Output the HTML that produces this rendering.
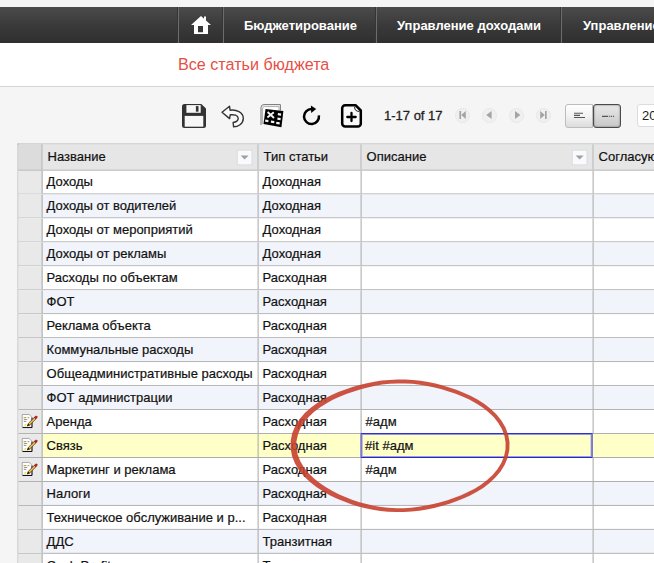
<!DOCTYPE html>
<html><head><meta charset="utf-8">
<style>
html,body{margin:0;padding:0;}
body{width:654px;height:563px;overflow:hidden;background:#f5f5f5;font-family:"Liberation Sans",sans-serif;position:relative;}
#nav{position:absolute;left:0;top:7px;width:654px;height:36px;background:linear-gradient(#4b4b4b 0%,#3a3a3a 50%,#2f2f2f 100%);}
#nav .sep{position:absolute;top:0;width:1px;height:36px;background:#6c6c6c;border-left:1px solid #353535;}
#nav .it{position:absolute;top:0;height:36px;line-height:38px;color:#fff;font-weight:bold;font-size:13px;white-space:nowrap;}
#title{position:absolute;left:0;top:43px;width:654px;height:43px;background:#fff;border-bottom:1px solid #d4d4d4;}
#title span{position:absolute;left:178px;top:12px;font-size:16.15px;color:#e64f45;white-space:nowrap;}
svg{position:absolute;overflow:visible}
#pg{position:absolute;left:384px;top:108px;font-size:13px;line-height:15px;color:#222;-webkit-text-stroke:0.3px #222;white-space:nowrap;}
.pb{position:absolute;top:107.5px;width:15px;height:15px;border-radius:8px;background:#f0f0f0;box-sizing:border-box;border:1px solid #e8e8e8;}
.vb{position:absolute;top:104px;height:23.5px;box-sizing:border-box;}
#vb1{left:565px;width:28px;border:1px solid #bcbcbc;border-radius:3px 0 0 3px;background:linear-gradient(#ffffff,#f2f2f2 50%,#dcdcdc);}
#vb2{left:593px;width:28px;border:1px solid #4a4a4a;border-radius:3px;background:linear-gradient(#e9e9e9,#d8d8d8 50%,#c8c8c8);box-shadow:inset 0 0 2px #666;}
#sel{position:absolute;left:637px;top:104px;width:40px;height:23px;box-sizing:border-box;border:1px solid #dcdcdc;border-radius:3px;background:#fff;font-size:13px;line-height:21px;padding-left:4px;color:#222;}
#grid{transform-origin:0 0;transform:translate(-0.4px,-0.45px) scaleY(0.9983);position:absolute;left:18px;top:144px;width:640px;height:430px;background:#fff;border-left:1px solid #a8a8a8;border-top:1px solid #a8a8a8;}
.hdr{position:absolute;left:0;top:0;height:25px;width:640px;background:#e6e6e6;border-bottom:1px solid #a8a8a8;z-index:2}
.row{position:absolute;left:0;width:640px;height:24px;border-bottom:1px solid #acacac;box-sizing:border-box;}
.row.odd{background:#fff}
.row.even{background:#f1f4fa}
.row.sel{background:#ffffc8}
.c{position:absolute;top:0;height:100%;box-sizing:border-box;border-right:1px solid #a8a8a8;font-size:13px;line-height:23px;color:#111;-webkit-text-stroke:0.2px #111;white-space:nowrap;overflow:hidden;padding-left:4px;}
.c0{left:0;width:24px;background:#e9e9e9;padding:0}
.c1{left:24px;width:216px;}
.c2{left:240px;width:103px;}
.c3{left:343px;width:232px;}
.c4{left:575px;width:80px;}
.hdr .c{line-height:24px;background:#e6e6e6;padding-left:5px}
.hdr .c0{background:#dcdcdc}
.dd{position:absolute;top:5px;width:14px;height:14px;border:1px solid #d4d4d4;background:#f9fafd;}
.dd:after{content:"";position:absolute;left:3px;top:5px;border:4px solid transparent;border-top:4px solid #a0a0a0;border-bottom:none;}
.edit{position:absolute;left:342px;top:-1px;width:232px;height:25px;border:1px solid #2323dc;box-shadow:inset 0 0 0 1px rgba(40,40,220,.45);box-sizing:border-box;background:#ffffc8;line-height:23px;padding-left:3.5px}
.pen{left:-1px;top:-1px}
</style></head><body>
<div id="nav">
 <div class="sep" style="left:177px"></div>
 <div class="sep" style="left:222px"></div>
 <div class="sep" style="left:375px"></div>
 <div class="sep" style="left:560px"></div>
 <svg style="left:190px;top:8px" width="22" height="20" viewBox="0 0 22 20"><path d="M11 1 L1 10 H4 V19 H18 V10 H21 L16 5.5 V1.5 H14 V3.7 Z M8 11 H13 V17.3 H8 Z" fill="#fff" fill-rule="evenodd"/></svg>
 <div class="it" style="left:244px">Бюджетирование</div>
 <div class="it" style="left:397px">Управление доходами</div>
 <div class="it" style="left:583px">Управление</div>
</div>
<div id="title"><span>Все статьи бюджета</span></div>

<!-- toolbar icons -->
<svg style="left:182px;top:104px" width="24" height="24" viewBox="0 0 24 24">
 <path d="M2.5 0 H19.3 L24 4.5 V21.5 a2.5 2.5 0 0 1 -2.5 2.5 H2.5 a2.5 2.5 0 0 1 -2.5 -2.5 V2.5 a2.5 2.5 0 0 1 2.5 -2.5 Z" fill="#333"/>
 <rect x="4.4" y="1.1" width="14.3" height="7.7" fill="#f7f7f7"/>
 <rect x="13.9" y="2.1" width="2.6" height="5.6" fill="#333"/>
 <rect x="2.7" y="11.9" width="18.6" height="10.8" fill="#f7f7f7"/>
</svg>
<svg style="left:216px;top:100px" width="34" height="32" viewBox="216 100 34 32">
 <path d="M222 112.3 L229.5 106.3 L230.1 110.2 C236 109.4 243.5 112 243.3 118.6 C243 124 238 126.8 233.6 126.8 L233.1 122.5 C236.5 122 238.3 120.5 238.2 118.2 C238 115 234 114.5 230.2 114.8 L229.6 118.6 Z" fill="#f9f9f9" stroke="#333" stroke-width="1.4" stroke-linejoin="round"/>
</svg>
<svg style="left:255px;top:100px" width="34" height="32" viewBox="0 0 34 32">
 <path d="M6 25 V7.5 Q6 4.6 9 4.6 H25.4 V10.5" fill="none" stroke="#777" stroke-width="1"/>
 <path d="M7.6 24 V8.6 Q7.6 6.6 9.6 6.6 H24 V10.5" fill="#fff" stroke="#999" stroke-width="0.8"/>
 <path d="M10.5 9.1 L28.4 11.1 L26.4 27.3 L8.5 23.9 Z" fill="#000"/>
 <path d="M12.6 12 L19 18 M18.8 12.2 L12.4 17.4" stroke="#f4f4f4" stroke-width="1.9"/>
 <path d="M22.9 13.1 l3.3 .4 l-.2 2.2 l-3.3 -.4z M22.5 17.6 l3.2 .4 l-.2 2.2 l-3.2 -.4z M10.3 19.5 l3.2 .5 l-.2 2.2 l-3.2 -.5z M16 20.6 l3.4 .5 l-.2 2.1 l-3.4 -.5z M21.3 21.8 l3.5 .5 l-.2 2.2 l-3.5 -.6z" fill="#f4f4f4"/>
</svg>
<svg style="left:295px;top:100px" width="34" height="32" viewBox="0 0 34 32">
 <path d="M23.9 15.4 A7.5 7.5 0 1 1 16.6 9.0" fill="none" stroke="#000" stroke-width="2.5"/>
 <path d="M15.9 5.6 L21.2 9.1 L16.2 12.9 Z" fill="#000"/>
</svg>
<svg style="left:335px;top:100px" width="34" height="32" viewBox="0 0 34 32">
 <path d="M10.2 5.2 H20.5 L25.8 10.5 V23.6 a3 3 0 0 1 -3 3 H10.2 a3 3 0 0 1 -3 -3 V8.2 a3 3 0 0 1 3 -3 Z" fill="#fafafa" stroke="#000" stroke-width="2.5" stroke-linejoin="round"/>
 <path d="M19.6 6.8 Q19.6 11.6 24.4 11.4" fill="none" stroke="#000" stroke-width="0.9"/>
 <path d="M12.3 17 H20.7 M16.5 12.9 V21.1" stroke="#000" stroke-width="2.3" stroke-linecap="round"/>
</svg>

<div id="pg">1-17 of 17</div>
<div class="pb" style="left:455px"></div>
<div class="pb" style="left:481.5px"></div>
<div class="pb" style="left:509px"></div>
<div class="pb" style="left:536px"></div>
<svg style="left:454px;top:107px" width="100" height="17" viewBox="454 107 100 17">
 <g fill="#a4a4a4">
  <path d="M459.4 111 h1.7 v8 h-1.7z M465.8 111 v8 l-4.6 -4z"/>
  <path d="M491.6 111 v8 l-5.4 -4z"/>
  <path d="M515 111 v8 l5.4 -4z"/>
  <path d="M540.2 111 v8 l4.6 -4z M545 111 h1.7 v8 h-1.7z"/>
 </g>
</svg>
<div class="vb" id="vb1"></div>
<div class="vb" id="vb2"></div>
<svg style="left:565px;top:104px" width="56" height="23" viewBox="565 104 56 23">
 <path d="M574 113.2 h9 M574 115.4 h6 M574 117.5 h11" stroke="#555" stroke-width="1.1"/>
 <path d="M602 116.4 h6.2 M609.3 116.4 h1 M611.1 116.4 h1 M613 116.4 h1" stroke="#555" stroke-width="1.1"/>
</svg>
<div id="sel">20</div>

<div id="grid">
 <div class="hdr">
  <div class="c c0"></div>
  <div class="c c1">Название<div class="dd" style="left:194px"></div></div>
  <div class="c c2">Тип статьи</div>
  <div class="c c3">Описание<div class="dd" style="left:210px"></div></div>
  <div class="c c4">Согласую</div>
 </div>
 <div class="row odd" style="top:26px"><div class="c c0"></div><div class="c c1">Доходы</div><div class="c c2">Доходная</div><div class="c c3"></div><div class="c c4"></div></div>
 <div class="row even" style="top:50px"><div class="c c0"></div><div class="c c1">Доходы от водителей</div><div class="c c2">Доходная</div><div class="c c3"></div><div class="c c4"></div></div>
 <div class="row odd" style="top:74px"><div class="c c0"></div><div class="c c1">Доходы от мероприятий</div><div class="c c2">Доходная</div><div class="c c3"></div><div class="c c4"></div></div>
 <div class="row even" style="top:98px"><div class="c c0"></div><div class="c c1">Доходы от рекламы</div><div class="c c2">Доходная</div><div class="c c3"></div><div class="c c4"></div></div>
 <div class="row odd" style="top:122px"><div class="c c0"></div><div class="c c1">Расходы по объектам</div><div class="c c2">Расходная</div><div class="c c3"></div><div class="c c4"></div></div>
 <div class="row even" style="top:146px"><div class="c c0"></div><div class="c c1">ФОТ</div><div class="c c2">Расходная</div><div class="c c3"></div><div class="c c4"></div></div>
 <div class="row odd" style="top:170px"><div class="c c0"></div><div class="c c1">Реклама объекта</div><div class="c c2">Расходная</div><div class="c c3"></div><div class="c c4"></div></div>
 <div class="row even" style="top:194px"><div class="c c0"></div><div class="c c1">Коммунальные расходы</div><div class="c c2">Расходная</div><div class="c c3"></div><div class="c c4"></div></div>
 <div class="row odd" style="top:218px"><div class="c c0"></div><div class="c c1">Общеадминистративные расходы</div><div class="c c2">Расходная</div><div class="c c3"></div><div class="c c4"></div></div>
 <div class="row even" style="top:242px"><div class="c c0"></div><div class="c c1">ФОТ администрации</div><div class="c c2">Расходная</div><div class="c c3"></div><div class="c c4"></div></div>
 <div class="row odd" style="top:266px"><div class="c c0"><svg class="pen" width="26" height="24" viewBox="0 0 26 24"><path d="M4.6 5.4 H11.6 L14.3 8.1 V18.3 H4.6 Z" fill="#fdfdfd" stroke="#8a8a8a" stroke-width="0.7"/><path d="M5 18.5 H14.4 V8.6" fill="none" stroke="#111" stroke-width="1"/><path d="M6 8.6h2.7M10 8.6h1.7M6.2 10.5h3.4M6.2 12.4h2.5" stroke="#8c8c58" stroke-width="0.9"/><path d="M6.9 16.4l1.6 -1.2M11.4 16.3h1.4" stroke="#e6e61e" stroke-width="1.3"/><g transform="translate(0 0.9)"><path d="M9.7 16.1 L10.7 13.5 L16.9 7.3 L18.4 8.8 L12.2 15 Z" fill="#f6bb50" stroke="#3a2a10" stroke-width="0.7"/><path d="M16.7 7.5 L18.1 6.1 Q19.2 5.6 19.7 6.7 Q19.8 7.5 18.3 9 Z" fill="#d81818" stroke="#7a1010" stroke-width="0.5"/><path d="M9.7 16.1 L10.7 13.7 L12.1 15.1 Z" fill="#111"/></g></svg></div><div class="c c1">Аренда</div><div class="c c2">Расходная</div><div class="c c3">#адм</div><div class="c c4"></div></div>
 <div class="row sel" style="top:290px"><div class="c c0"><svg class="pen" width="26" height="24" viewBox="0 0 26 24"><path d="M4.6 5.4 H11.6 L14.3 8.1 V18.3 H4.6 Z" fill="#fdfdfd" stroke="#8a8a8a" stroke-width="0.7"/><path d="M5 18.5 H14.4 V8.6" fill="none" stroke="#111" stroke-width="1"/><path d="M6 8.6h2.7M10 8.6h1.7M6.2 10.5h3.4M6.2 12.4h2.5" stroke="#8c8c58" stroke-width="0.9"/><path d="M6.9 16.4l1.6 -1.2M11.4 16.3h1.4" stroke="#e6e61e" stroke-width="1.3"/><g transform="translate(0 0.9)"><path d="M9.7 16.1 L10.7 13.5 L16.9 7.3 L18.4 8.8 L12.2 15 Z" fill="#f6bb50" stroke="#3a2a10" stroke-width="0.7"/><path d="M16.7 7.5 L18.1 6.1 Q19.2 5.6 19.7 6.7 Q19.8 7.5 18.3 9 Z" fill="#d81818" stroke="#7a1010" stroke-width="0.5"/><path d="M9.7 16.1 L10.7 13.7 L12.1 15.1 Z" fill="#111"/></g></svg></div><div class="c c1">Связь</div><div class="c c2">Расходная</div><div class="c c3 edit">#it #адм</div><div class="c c4"></div></div>
 <div class="row odd" style="top:314px"><div class="c c0"><svg class="pen" width="26" height="24" viewBox="0 0 26 24"><path d="M4.6 5.4 H11.6 L14.3 8.1 V18.3 H4.6 Z" fill="#fdfdfd" stroke="#8a8a8a" stroke-width="0.7"/><path d="M5 18.5 H14.4 V8.6" fill="none" stroke="#111" stroke-width="1"/><path d="M6 8.6h2.7M10 8.6h1.7M6.2 10.5h3.4M6.2 12.4h2.5" stroke="#8c8c58" stroke-width="0.9"/><path d="M6.9 16.4l1.6 -1.2M11.4 16.3h1.4" stroke="#e6e61e" stroke-width="1.3"/><g transform="translate(0 0.9)"><path d="M9.7 16.1 L10.7 13.5 L16.9 7.3 L18.4 8.8 L12.2 15 Z" fill="#f6bb50" stroke="#3a2a10" stroke-width="0.7"/><path d="M16.7 7.5 L18.1 6.1 Q19.2 5.6 19.7 6.7 Q19.8 7.5 18.3 9 Z" fill="#d81818" stroke="#7a1010" stroke-width="0.5"/><path d="M9.7 16.1 L10.7 13.7 L12.1 15.1 Z" fill="#111"/></g></svg></div><div class="c c1">Маркетинг и реклама</div><div class="c c2">Расходная</div><div class="c c3">#адм</div><div class="c c4"></div></div>
 <div class="row even" style="top:338px"><div class="c c0"></div><div class="c c1">Налоги</div><div class="c c2">Расходная</div><div class="c c3"></div><div class="c c4"></div></div>
 <div class="row odd" style="top:362px"><div class="c c0"></div><div class="c c1">Техническое обслуживание и р...</div><div class="c c2">Расходная</div><div class="c c3"></div><div class="c c4"></div></div>
 <div class="row even" style="top:386px"><div class="c c0"></div><div class="c c1">ДДС</div><div class="c c2">Транзитная</div><div class="c c3"></div><div class="c c4"></div></div>
 <div class="row odd" style="top:410px"><div class="c c0"></div><div class="c c1">Cash Profit</div><div class="c c2">Транзитная</div><div class="c c3"></div><div class="c c4"></div></div>
</div>
<svg style="left:0;top:0" width="654" height="563" viewBox="0 0 654 563">
 <path d="M405.1 379.5 L412.9 380.0 L420.5 380.8 L428.1 382.0 L435.5 383.6 L442.8 385.5 L450.0 387.7 L457.0 390.1 L464.1 392.9 L471.0 396.1 L477.9 399.8 L484.5 404.1 L490.8 408.9 L496.6 414.5 L501.5 420.7 L505.5 427.4 L508.2 434.7 L509.5 442.3 L509.3 450.0 L507.7 457.5 L504.7 464.8 L500.6 471.5 L495.4 477.6 L489.6 483.1 L483.2 487.9 L476.5 492.1 L469.6 495.7 L462.7 498.8 L455.7 501.5 L448.7 503.9 L441.6 506.0 L434.3 507.9 L426.9 509.4 L419.3 510.7 L411.6 511.6 L403.8 512.1 L395.9 512.1 L388.1 511.8 L380.4 511.0 L372.9 509.8 L365.5 508.3 L358.3 506.4 L351.2 504.2 L344.2 501.6 L337.2 498.7 L330.2 495.4 L323.4 491.6 L316.7 487.3 L310.3 482.3 L304.4 476.7 L299.2 470.5 L295.0 463.6 L292.1 456.3 L290.6 448.6 L290.7 440.8 L292.2 433.2 L295.2 425.9 L299.5 419.2 L304.8 413.1 L310.8 407.7 L317.3 402.9 L324.2 398.8 L331.2 395.2 L338.3 392.1 L345.4 389.5 L352.5 387.1 L359.6 385.0 L366.9 383.3 L374.3 381.8 L381.8 380.6 L389.5 379.9 L397.3 379.5 Z M397.4 383.4 L389.8 383.8 L382.3 384.6 L375.0 385.8 L367.8 387.4 L360.8 389.2 L353.8 391.4 L346.9 393.8 L340.1 396.5 L333.3 399.6 L326.7 403.2 L320.2 407.2 L314.2 411.8 L308.7 416.9 L304.0 422.5 L300.3 428.5 L297.8 434.9 L296.4 441.4 L296.4 448.1 L297.7 454.7 L300.2 461.1 L303.8 467.3 L308.4 473.0 L313.8 478.3 L319.7 483.1 L326.0 487.3 L332.5 491.1 L339.2 494.4 L345.9 497.3 L352.6 499.9 L359.5 502.2 L366.5 504.1 L373.6 505.7 L381.0 507.0 L388.4 507.8 L396.0 508.2 L403.7 508.2 L411.3 507.7 L418.8 506.8 L426.2 505.6 L433.4 504.1 L440.5 502.3 L447.5 500.2 L454.4 497.8 L461.2 495.2 L467.9 492.1 L474.6 488.7 L481.0 484.7 L487.1 480.1 L492.6 474.9 L497.4 469.2 L501.3 463.0 L504.0 456.4 L505.5 449.5 L505.6 442.6 L504.4 435.7 L501.9 429.1 L498.3 422.9 L493.7 417.1 L488.3 411.9 L482.3 407.3 L475.9 403.2 L469.3 399.6 L462.5 396.5 L455.7 393.8 L448.7 391.4 L441.7 389.2 L434.6 387.4 L427.4 385.9 L420.0 384.7 L412.5 383.8 L405.0 383.4 Z" fill="#c8402f" fill-opacity="0.9" fill-rule="evenodd"/>
</svg>
</body></html>
